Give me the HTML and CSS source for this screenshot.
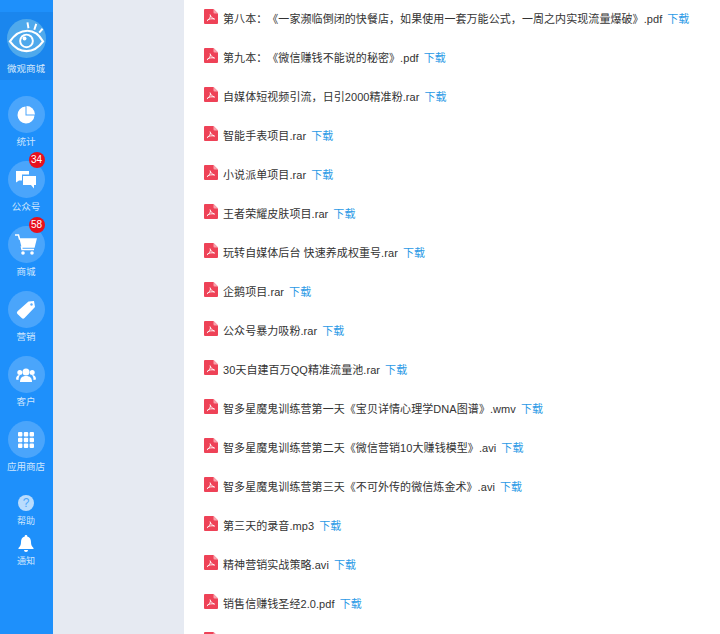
FILE: index.html
```html
<!DOCTYPE html>
<html lang="zh-CN">
<head>
<meta charset="utf-8">
<title>微观商城</title>
<link rel="stylesheet" href="styles.css">
</head>
<body>
<svg class="defs" width="0" height="0" aria-hidden="true">
  <symbol id="pdf" viewBox="0 0 14 15">
    <path d="M0 1a1 1 0 0 1 1-1h8.500L14 4.500V14a1 1 0 0 1-1 1H1a1 1 0 0 1-1-1z" fill="#ee4257"/>
    <path d="M9.500 0L14 4.500h-3.500a1 1 0 0 1-1-1z" fill="#f7a3ae"/>
    <path d="M6 5.500c.4 2 1.800 3.600 5 4.800M6.500 6.500C6.500 8.500 5 10.500 3 12M3.500 10.800c2-.9 4-1.200 6.500-.9" fill="none" stroke="#fff" stroke-width=".9"/>
  </symbol>
</svg>
<div class="page">
  <nav class="sidebar">
    <div class="brand">
      <div class="logo">
        <svg width="40" height="40" viewBox="0 0 40 40">
          <path d="M3 23C9 14 15 12 21 12c6 0 12 4 16 11-5 7-11 10-17 10S8 30 3 23z" fill="none" stroke="#fff" stroke-width="2.200"/>
          <circle cx="20" cy="22.500" r="7.500" fill="#fff"/>
          <circle cx="20" cy="22.500" r="5.500" fill="#4fa9ec"/>
          <circle cx="18" cy="20" r="2" fill="#fff"/>
          <path d="M22 9.500l-1-6M28 11l2-6M33 14l3.500-4" stroke="#fff" stroke-width="2"/>
        </svg>
      </div>
      <span>微观商城</span>
    </div>
    <ul class="menu">
      <li class="item">
        <div class="disc">
          <svg width="20" height="20" viewBox="0 0 20 20"><path d="M9.500 1.500a8.500 8.500 0 1 0 9 9h-9z" fill="#fff"/><path d="M10.500 1a8.500 8.500 0 0 1 8.500 8.500h-8.500z" fill="#fff"/></svg>
        </div>
        <span>统计</span>
      </li>
      <li class="item">
        <div class="disc">
          <b class="badge">34</b>
          <svg width="20" height="20" viewBox="0 0 20 20"><path d="M0 1h13v3.500H6v6H3l-3 2z" fill="#fff"/><path d="M7 6h13v9h-2v3.500L15 15H7z" fill="#fff"/></svg>
        </div>
        <span>公众号</span>
      </li>
      <li class="item">
        <div class="disc">
          <b class="badge">58</b>
          <svg width="22" height="22" viewBox="0 0 22 22"><path d="M0 1h3.500l1 4H21l-2 8H6.500l.5 2.500h12" fill="none" stroke="#fff" stroke-width="1.500"/><path d="M4.500 5H21l-2 8H6.500z" fill="#fff"/><circle cx="8" cy="19" r="1.800" fill="#fff"/><circle cx="17" cy="19" r="1.800" fill="#fff"/></svg>
        </div>
        <span>商城</span>
      </li>
      <li class="item">
        <div class="disc">
          <svg width="20" height="20" viewBox="0 0 20 20"><path d="M12.500 1.500L18 1l1 6L8.500 18a2 2 0 0 1-2.800 0L1.500 14a2 2 0 0 1 0-2.800z" fill="#fff"/><circle cx="15.500" cy="4.500" r="1.200" fill="#5aaeff"/></svg>
        </div>
        <span>营销</span>
      </li>
      <li class="item">
        <div class="disc">
          <svg width="20" height="16" viewBox="0 0 20 16"><circle cx="10" cy="5" r="3.500" fill="#fff"/><path d="M4 15c0-4 2-6 6-6s6 2 6 6z" fill="#fff"/><circle cx="3.800" cy="5.500" r="2.500" fill="#fff"/><circle cx="16.200" cy="5.500" r="2.500" fill="#fff"/><path d="M0 12.500c0-3 1.200-4.500 4-4.500-1 1.300-1.500 3-1.500 5zM20 12.500c0-3-1.200-4.500-4-4.500 1 1.300 1.500 3 1.500 5z" fill="#fff"/></svg>
        </div>
        <span>客户</span>
      </li>
      <li class="item">
        <div class="disc">
          <svg width="16" height="16" viewBox="0 0 16 16" fill="#fff"><rect width="4.400" height="4.400" rx="1"/><rect x="5.800" width="4.400" height="4.400" rx="1"/><rect x="11.600" width="4.400" height="4.400" rx="1"/><rect y="5.800" width="4.400" height="4.400" rx="1"/><rect x="5.800" y="5.800" width="4.400" height="4.400" rx="1"/><rect x="11.600" y="5.800" width="4.400" height="4.400" rx="1"/><rect y="11.600" width="4.400" height="4.400" rx="1"/><rect x="5.800" y="11.600" width="4.400" height="4.400" rx="1"/><rect x="11.600" y="11.600" width="4.400" height="4.400" rx="1"/></svg>
        </div>
        <span>应用商店</span>
      </li>
    </ul>
    <div class="tools">
      <div class="tool">
        <i class="help">?</i>
        <span>帮助</span>
      </div>
      <div class="tool">
        <svg width="16" height="17" viewBox="0 0 16 17"><path d="M8 0a1.200 1.200 0 0 1 1.200 1.500C12 2.300 13 4.500 13 7c0 3 .8 4.500 2.500 6v1H.5v-1C2.200 11.500 3 10 3 7c0-2.500 1-4.700 3.800-5.500A1.200 1.200 0 0 1 8 0z" fill="#fff"/><path d="M6 15h4a2 2 0 0 1-4 0z" fill="#fff"/></svg>
        <span>通知</span>
      </div>
    </div>
  </nav>
  <aside class="panel"></aside>
  <main class="content">
    <ul class="files">
      <li class="file"><svg class="ficon"><use href="#pdf"/></svg><span>第八本：《一家濒临倒闭的快餐店，如果使用一套万能公式，一周之内实现流量爆破》.pdf</span><a>下载</a></li>
      <li class="file"><svg class="ficon"><use href="#pdf"/></svg><span>第九本：《微信赚钱不能说的秘密》.pdf</span><a>下载</a></li>
      <li class="file"><svg class="ficon"><use href="#pdf"/></svg><span>自媒体短视频引流，日引2000精准粉.rar</span><a>下载</a></li>
      <li class="file"><svg class="ficon"><use href="#pdf"/></svg><span>智能手表项目.rar</span><a>下载</a></li>
      <li class="file"><svg class="ficon"><use href="#pdf"/></svg><span>小说派单项目.rar</span><a>下载</a></li>
      <li class="file"><svg class="ficon"><use href="#pdf"/></svg><span>王者荣耀皮肤项目.rar</span><a>下载</a></li>
      <li class="file"><svg class="ficon"><use href="#pdf"/></svg><span>玩转自媒体后台 快速养成权重号.rar</span><a>下载</a></li>
      <li class="file"><svg class="ficon"><use href="#pdf"/></svg><span>企鹅项目.rar</span><a>下载</a></li>
      <li class="file"><svg class="ficon"><use href="#pdf"/></svg><span>公众号暴力吸粉.rar</span><a>下载</a></li>
      <li class="file"><svg class="ficon"><use href="#pdf"/></svg><span>30天自建百万QQ精准流量池.rar</span><a>下载</a></li>
      <li class="file"><svg class="ficon"><use href="#pdf"/></svg><span>智多星魔鬼训练营第一天《宝贝详情心理学DNA图谱》.wmv</span><a>下载</a></li>
      <li class="file"><svg class="ficon"><use href="#pdf"/></svg><span>智多星魔鬼训练营第二天《微信营销10大赚钱模型》.avi</span><a>下载</a></li>
      <li class="file"><svg class="ficon"><use href="#pdf"/></svg><span>智多星魔鬼训练营第三天《不可外传的微信炼金术》.avi</span><a>下载</a></li>
      <li class="file"><svg class="ficon"><use href="#pdf"/></svg><span>第三天的录音.mp3</span><a>下载</a></li>
      <li class="file"><svg class="ficon"><use href="#pdf"/></svg><span>精神营销实战策略.avi</span><a>下载</a></li>
      <li class="file"><svg class="ficon"><use href="#pdf"/></svg><span>销售信赚钱圣经2.0.pdf</span><a>下载</a></li>
      <li class="file"><svg class="ficon"><use href="#pdf"/></svg></li>
    </ul>
  </main>
</div>
</body>
</html>
```
FILE: styles.css
```css
* { box-sizing: border-box; }
html, body { margin: 0; height: 100%; overflow: hidden; }
body { font-family: "Liberation Sans", "Noto Sans CJK SC", sans-serif; background: #fff; }
ul { list-style: none; margin: 0; padding: 0; }
.defs { position: absolute; }
.page { display: flex; height: 634px; }

.sidebar { width: 53px; flex: none; background: #1e90fb; padding: 12px 1px 0 0; color: #fff; display: flex; flex-direction: column; }
.brand { height: 68px; margin-right: -1px; background: #1a86ee; display: flex; flex-direction: column; align-items: center; padding: 7px 1px 0 0; font-size: 9.500px; line-height: 14px; color: #d5e9fc; }
.logo { width: 39px; height: 39px; border-radius: 50%; background: #4fa9ec; margin-bottom: 4px; }
.logo svg { display: block; width: 39px; height: 39px; }

.menu { display: flex; flex-direction: column; gap: 25px; padding-top: 16px; }
.item { display: flex; flex-direction: column; align-items: center; font-size: 9.500px; line-height: 12px; color: #cfe6fd; height: 40px; }
.disc { position: relative; width: 37px; height: 37px; border-radius: 50%; background: #4aa5fb; display: flex; align-items: center; justify-content: center; margin-bottom: 3px; flex: none; }
.badge { position: absolute; top: -9px; right: 0; width: 16px; height: 16px; border-radius: 50%; background: #e8101c; color: #fff; font-size: 10px; font-weight: 400; line-height: 16px; text-align: center; }

.tools { display: flex; flex-direction: column; gap: 8px; padding-top: 34px; }
.tool { display: flex; flex-direction: column; align-items: center; font-size: 9px; line-height: 12px; color: #cfe6fd; }
.help { width: 16px; height: 16px; border-radius: 50%; background: #b9dcfd; color: #4aa5fb; font-style: normal; font-size: 12px; line-height: 16px; text-align: center; margin-bottom: 4px; }
.tool svg { margin-bottom: 3px; }

.panel { width: 131px; flex: none; background: #e6eaf2; }

.content { flex: 1; min-width: 0; padding: 0 0 0 20px; overflow: hidden; }
.files { margin-top: -1px; }
.file { display: flex; align-items: center; height: 38.950px; font-size: 11px; letter-spacing: .07px; color: #333; white-space: nowrap; text-spacing-trim: space-all; }
.ficon { width: 14px; height: 15px; margin: -3px 5px 0 0; flex: none; }
.file a { color: #2b9ae6; margin-left: 5px; }
```
